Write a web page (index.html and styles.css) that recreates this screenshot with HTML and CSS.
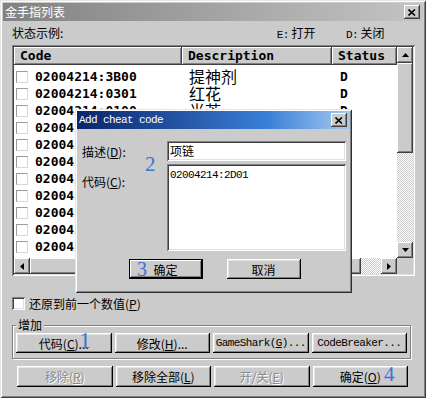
FILE: index.html
```html
<!DOCTYPE html>
<html lang="zh">
<head>
    <meta charset="UTF-8">
    <title>金手指列表</title>
    <link rel="stylesheet" href="styles.css">
</head>
<body>
    <div class="window">
        <div class="titlebar">
            <span class="title">金手指列表</span>
            <span class="close-btn"><svg width="8" height="7" viewBox="0 0 8 7"><path d="M0.5 0.5 L7 6.5 M7 0.5 L0.5 6.5" stroke="#000" stroke-width="1.6"/></svg></span>
        </div>

        <div class="content">
            <div class="legend">
                <span class="legend-title">状态示例:</span>
                <span class="legend-key"><span class="mono">E:</span> 打开</span>
                <span class="legend-key"><span class="mono">D:</span> 关闭</span>
            </div>

            <div class="listbox">
                <div class="list-main">
                    <div class="list-view">
                        <div class="list-head">
                            <div class="head-cell">Code</div>
                            <div class="head-cell">Description</div>
                            <div class="head-cell">Status</div>
                        </div>
                        <div class="list-rows">
                            <div class="row"><div class="cell-code"><span class="box"></span>02004214:3B00</div><div class="cell-desc">提神剂</div><div class="cell-status">D</div></div>
                            <div class="row"><div class="cell-code"><span class="box"></span>02004214:0301</div><div class="cell-desc">红花</div><div class="cell-status">D</div></div>
                            <div class="row"><div class="cell-code"><span class="box"></span>02004214:0100</div><div class="cell-desc">光芒</div><div class="cell-status">D</div></div>
                            <div class="row"><div class="cell-code"><span class="box"></span>02004214:0401</div><div class="cell-desc">药草</div><div class="cell-status">D</div></div>
                            <div class="row"><div class="cell-code"><span class="box"></span>02004214:0501</div><div class="cell-desc">药草</div><div class="cell-status">D</div></div>
                            <div class="row"><div class="cell-code"><span class="box"></span>02004214:0601</div><div class="cell-desc">药草</div><div class="cell-status">D</div></div>
                            <div class="row"><div class="cell-code"><span class="box"></span>02004214:0701</div><div class="cell-desc">药草</div><div class="cell-status">D</div></div>
                            <div class="row"><div class="cell-code"><span class="box"></span>02004214:0801</div><div class="cell-desc">药草</div><div class="cell-status">D</div></div>
                            <div class="row"><div class="cell-code"><span class="box"></span>02004214:0901</div><div class="cell-desc">药草</div><div class="cell-status">D</div></div>
                            <div class="row"><div class="cell-code"><span class="box"></span>02004214:0A01</div><div class="cell-desc">药草</div><div class="cell-status">D</div></div>
                            <div class="row"><div class="cell-code"><span class="box"></span>02004214:0B01</div><div class="cell-desc">药草</div><div class="cell-status">D</div></div>
                        </div>
                    </div>
                    <div class="vscroll">
                        <span class="sb-btn"><svg width="7" height="4" viewBox="0 0 7 4"><polygon points="0,4 3.5,0 7,4" fill="#000"/></svg></span>
                        <span class="sb-thumb v-thumb"></span>
                        <span class="sb-track"></span>
                        <span class="sb-btn"><svg width="7" height="4" viewBox="0 0 7 4"><polygon points="0,0 7,0 3.5,4" fill="#000"/></svg></span>
                    </div>
                </div>
                <div class="hscroll-row">
                    <div class="hscroll">
                        <span class="sb-btn"><svg width="4" height="7" viewBox="0 0 4 7"><polygon points="4,0 4,7 0,3.5" fill="#000"/></svg></span>
                        <span class="sb-thumb h-thumb"></span>
                        <span class="sb-track h-track"></span>
                        <span class="sb-btn"><svg width="4" height="7" viewBox="0 0 4 7"><polygon points="0,0 0,7 4,3.5" fill="#000"/></svg></span>
                    </div>
                    <div class="corner"></div>
                </div>
            </div>

            <div class="restore">
                <span class="check"></span>
                <span>还原到前一个数值(<u>P</u>)</span>
            </div>

            <fieldset class="group">
                <legend>增加</legend>
                <div class="btn-row">
                    <button class="btn">代码(<u>C</u>)...</button>
                    <button class="btn">修改(<u>H</u>)...</button>
                    <button class="btn mono">GameShark(<u>G</u>)...</button>
                    <button class="btn mono">CodeBreaker...</button>
                </div>
            </fieldset>

            <div class="btn-row actions">
                <button class="btn disabled">移除(<u>R</u>)</button>
                <button class="btn">移除全部(<u>L</u>)</button>
                <button class="btn disabled">开/关(<u>E</u>)</button>
                <button class="btn">确定(<u>O</u>)</button>
            </div>
        </div>

        <div class="dialog">
            <div class="dialog-title">
                <span class="mono">Add cheat code</span>
                <span class="close-btn"><svg width="8" height="7" viewBox="0 0 8 7"><path d="M0.5 0.5 L7 6.5 M7 0.5 L0.5 6.5" stroke="#000" stroke-width="1.6"/></svg></span>
            </div>
            <div class="dialog-body">
                <div class="form-grid">
                    <label class="field-label">描述(<u>D</u>):</label>
                    <div class="field">项链</div>
                    <label class="field-label top">代码(<u>C</u>):</label>
                    <div class="field area mono">02004214:2D01</div>
                </div>
                <div class="dialog-buttons">
                    <button class="btn default">确定</button>
                    <button class="btn">取消</button>
                </div>
            </div>
        </div>

        <span class="mark mark-1">1</span>
        <span class="mark mark-2">2</span>
        <span class="mark mark-3">3</span>
        <span class="mark mark-4">4</span>
    </div>
</body>
</html>
```

FILE: styles.css
```css
* {
    box-sizing: border-box;
}
body {
    margin: 0;
    width: 426px;
    height: 398px;
    overflow: hidden;
    background-color: #cbcbcb;
    font-family: "Noto Sans CJK SC", sans-serif;
    font-size: 12px;
    color: #000;
}
.mono {
    font-family: "Liberation Mono", monospace;
    font-size: 11px;
    letter-spacing: -0.6px;
}
.window {
    position: relative;
    width: 426px;
    height: 398px;
    padding: 3px;
    background-color: #cbcbcb;
    box-shadow: inset 1px 1px #e6e6e6, inset -1px -1px #404040, inset 2px 2px #fff, inset -2px -2px #808080;
}
.titlebar {
    height: 18px;
    display: flex;
    align-items: center;
    justify-content: space-between;
    padding: 0 3px 0 2px;
    background: linear-gradient(to right, #828282, #c4c4c4);
}
.title {
    color: #fff;
    line-height: 18px;
}
.close-btn {
    width: 16px;
    height: 14px;
    display: flex;
    align-items: center;
    justify-content: center;
    background-color: #cbcbcb;
    box-shadow: inset -1px -1px #404040, inset 1px 1px #fff, inset -2px -2px #808080;
}
.content {
    padding: 5px 8px 0 9px;
}
.legend {
    display: flex;
    height: 14px;
    line-height: 14px;
}
.legend-title {
    width: 272px;
}
.legend-key {
    width: 71px;
}

/* list */
.listbox {
    margin-top: 5px;
    width: 403px;
    height: 231px;
    padding: 2px;
    display: flex;
    flex-direction: column;
    box-shadow: inset 1px 1px #808080, inset -1px -1px #fff, inset 2px 2px #404040, inset -2px -2px #dfdfdf;
}
.list-main {
    display: flex;
    height: 211px;
}
.list-view {
    flex: 1;
    background-color: #fff;
    overflow: hidden;
}
.list-head, .row {
    display: grid;
    grid-template-columns: 168px 150px 1fr;
}
.head-cell {
    height: 18px;
    line-height: 18px;
    padding-left: 6px;
    background-color: #cbcbcb;
    font-family: "DejaVu Sans Mono", monospace;
    font-weight: bold;
    font-size: 13px;
    box-shadow: inset -1px -1px #404040, inset 1px 1px #fff, inset -2px -2px #808080;
}
.list-rows {
    padding-top: 3px;
}
.row {
    height: 17px;
    line-height: 17px;
    white-space: nowrap;
}
.cell-code {
    display: flex;
    align-items: center;
    gap: 7px;
    padding-left: 2px;
    font-family: "DejaVu Sans Mono", monospace;
    font-weight: bold;
    font-size: 13px;
}
.box {
    width: 12px;
    height: 12px;
    border: 1px solid #9a9a9a;
    border-right-color: #d8d8d8;
    border-bottom-color: #d8d8d8;
}
.cell-desc {
    padding-left: 7px;
    font-size: 16px;
}
.cell-status {
    padding-left: 8px;
    font-family: "DejaVu Sans Mono", monospace;
    font-weight: bold;
    font-size: 13px;
}

/* scrollbars */
.vscroll {
    width: 16px;
    display: flex;
    flex-direction: column;
}
.sb-btn {
    width: 16px;
    height: 16px;
    display: flex;
    align-items: center;
    justify-content: center;
    background-color: #cbcbcb;
    box-shadow: inset -1px -1px #404040, inset 1px 1px #fff, inset -2px -2px #808080;
}
.sb-thumb {
    background-color: #cbcbcb;
    box-shadow: inset -1px -1px #404040, inset 1px 1px #fff, inset -2px -2px #808080;
}
.v-thumb {
    height: 90px;
}
.sb-track {
    flex: 1;
    background: repeating-conic-gradient(#fff 0 25%, #cbcbcb 0 50%) 0 0 / 2px 2px;
}
.hscroll-row {
    display: flex;
    height: 16px;
}
.hscroll {
    flex: 1;
    display: flex;
}
.h-thumb {
    flex: 1;
}
.h-track {
    flex: none;
    width: 20px;
}
.corner {
    width: 16px;
    background-color: #cbcbcb;
}

/* controls */
.restore {
    margin-top: 20px;
    height: 14px;
    display: flex;
    align-items: center;
    gap: 4px;
}
.check {
    width: 13px;
    height: 13px;
    background-color: #fff;
    box-shadow: inset 1px 1px #808080, inset -1px -1px #fff, inset 2px 2px #404040, inset -2px -2px #dfdfdf;
}
.group {
    width: 399px;
    margin: 8px 0 0 0;
    padding: 1px 3px 5px 3px;
    border: 1px solid #808080;
    box-shadow: inset 1px 1px #fff, 1px 1px #fff;
}
.group legend {
    padding: 0 2px;
    line-height: 14px;
    background-color: #cbcbcb;
}
.btn-row {
    display: grid;
    grid-template-columns: repeat(4, 1fr);
    gap: 3px;
}
.btn {
    height: 20px;
    padding: 0;
    border: none;
    background-color: #cbcbcb;
    font-family: "Noto Sans CJK SC", sans-serif;
    font-size: 12px;
    color: #000;
    box-shadow: inset -1px -1px #000, inset 1px 1px #fff, inset -2px -2px #808080, inset 2px 2px #e4e4e4;
}
.btn.mono {
    font-family: "Liberation Mono", monospace;
    font-size: 11px;
    letter-spacing: -0.6px;
}
.actions {
    width: 399px;
    margin-top: 7px;
    padding: 0 3px 0 5px;
}
.actions .btn {
    height: 21px;
}
.btn.disabled {
    color: #8a8a8a;
    text-shadow: 1px 1px #fff;
}

/* dialog */
.dialog {
    position: absolute;
    left: 75px;
    top: 109px;
    width: 277px;
    height: 184px;
    padding: 2px;
    background-color: #cbcbcb;
    box-shadow: inset 1px 1px #e6e6e6, inset -1px -1px #303030, inset 2px 2px #fff, inset -2px -2px #808080;
}
.dialog-title {
    height: 18px;
    display: flex;
    align-items: center;
    justify-content: space-between;
    padding: 0 3px 0 2px;
    color: #fff;
    background: linear-gradient(to right, #0a246a, #3a80d8 70%, #a6caf0);
}
.dialog-body {
    padding: 12px 3px 0 5px;
}
.form-grid {
    display: grid;
    grid-template-columns: 85px 179px;
    row-gap: 3px;
    align-items: center;
}
.field-label.top {
    align-self: start;
    padding-top: 9px;
}
.field {
    height: 20px;
    padding: 2px 3px;
    background-color: #fff;
    line-height: 16px;
    box-shadow: inset 1px 1px #808080, inset -1px -1px #fff, inset 2px 2px #404040, inset -2px -2px #dfdfdf;
}
.field.area {
    height: 87px;
    padding-top: 3px;
}
.dialog-buttons {
    margin-top: 8px;
    display: flex;
    justify-content: center;
    gap: 24px;
}
.dialog-buttons .btn {
    width: 74px;
}
.btn.default {
    box-shadow: inset 0 0 0 1px #000, inset -2px -2px #000, inset 2px 2px #fff, inset -3px -3px #808080;
}

/* annotations */
.mark {
    position: absolute;
    font-family: "Liberation Serif", serif;
    color: #3d72d8;
    line-height: 1;
}
.mark-1 {
    left: 79px;
    top: 328px;
    font-size: 24px;
}
.mark-2 {
    left: 145px;
    top: 154px;
    font-size: 21px;
}
.mark-3 {
    left: 137px;
    top: 259px;
    font-size: 20px;
}
.mark-4 {
    left: 384px;
    top: 364px;
    font-size: 21px;
}
```
